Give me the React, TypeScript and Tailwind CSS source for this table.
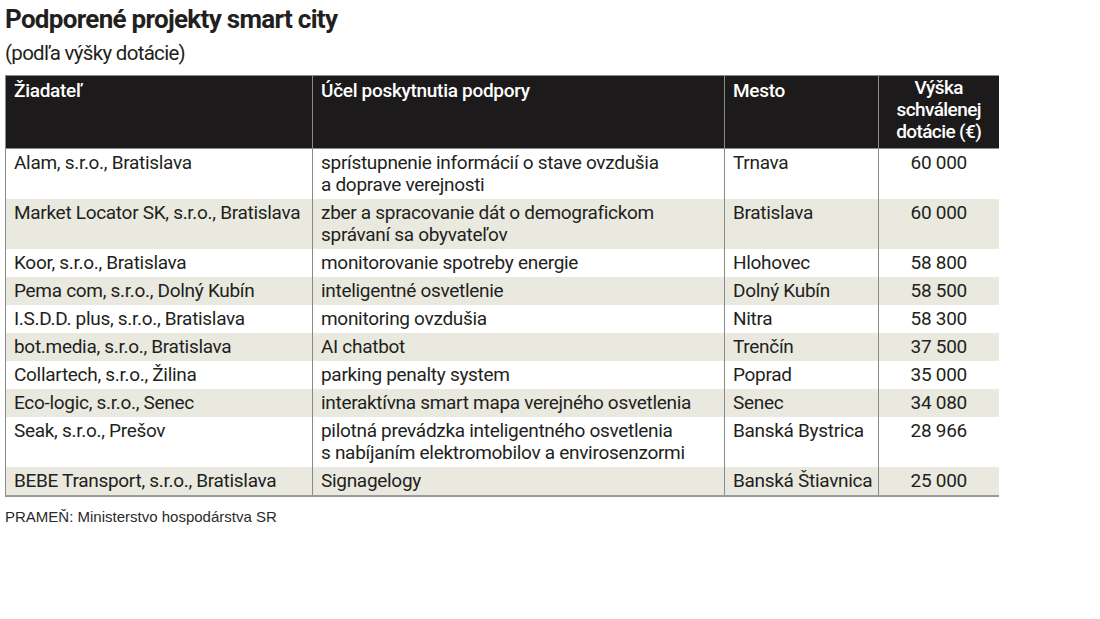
import React from "react";

type Row = {
  who: string;
  what: string[];
  city: string;
  amount: string;
};

const rows: Row[] = [
  { who: "Alam, s.r.o., Bratislava", what: ["sprístupnenie informácií o stave ovzdušia", "a doprave verejnosti"], city: "Trnava", amount: "60 000" },
  { who: "Market Locator SK, s.r.o., Bratislava", what: ["zber a spracovanie dát o demografickom", "správaní sa obyvateľov"], city: "Bratislava", amount: "60 000" },
  { who: "Koor, s.r.o., Bratislava", what: ["monitorovanie spotreby energie"], city: "Hlohovec", amount: "58 800" },
  { who: "Pema com, s.r.o., Dolný Kubín", what: ["inteligentné osvetlenie"], city: "Dolný Kubín", amount: "58 500" },
  { who: "I.S.D.D. plus, s.r.o., Bratislava", what: ["monitoring ovzdušia"], city: "Nitra", amount: "58 300" },
  { who: "bot.media, s.r.o., Bratislava", what: ["AI chatbot"], city: "Trenčín", amount: "37 500" },
  { who: "Collartech, s.r.o., Žilina", what: ["parking penalty system"], city: "Poprad", amount: "35 000" },
  { who: "Eco-logic, s.r.o., Senec", what: ["interaktívna smart mapa verejného osvetlenia"], city: "Senec", amount: "34 080" },
  { who: "Seak, s.r.o., Prešov", what: ["pilotná prevádzka inteligentného osvetlenia", "s nabíjaním elektromobilov a envirosenzormi"], city: "Banská Bystrica", amount: "28 966" },
  { who: "BEBE Transport, s.r.o., Bratislava", what: ["Signagelogy"], city: "Banská Štiavnica", amount: "25 000" },
];

export default function App() {
  return (
    <div className="w-[1100px] h-[619px] bg-white overflow-hidden font-['Roboto',sans-serif] text-[#231f20]">
      <div className="pl-[5px] pt-[3px]">
        <h1 className="text-[26px] leading-[33px] font-bold tracking-[-0.7px]">Podporené projekty smart city</h1>
        <div className="mt-[3px] text-[20.5px] leading-[28px] tracking-[-0.7px]">(podľa výšky dotácie)</div>

        <table className="mt-[8px] border-collapse table-fixed w-[993px] text-[19px] leading-[22px] tracking-[-0.3px] border-l border-[#8a8a8a]">
          <colgroup>
            <col className="w-[307px]" />
            <col className="w-[412px]" />
            <col className="w-[154px]" />
            <col className="w-[120px]" />
          </colgroup>
          <thead>
            <tr className="bg-[#1c1a1b] text-white h-[73px] align-top border-t border-b border-[#8a8a8a]">
              <th className="text-left font-medium px-2 pt-[4px]">Žiadateľ</th>
              <th className="text-left font-medium px-2 pt-[4px] border-l border-[#8a8a8a]">Účel poskytnutia podpory</th>
              <th className="text-left font-medium px-2 pt-[4px] border-l border-[#8a8a8a]">Mesto</th>
              <th className="text-center font-medium pt-[1px] leading-[22px] tracking-[-0.6px] border-l border-[#8a8a8a]">
                Výška
                <br />
                schválenej
                <br />
                dotácie (€)
              </th>
            </tr>
          </thead>
          <tbody>
            {rows.map((r, i) => (
              <tr key={r.who} className={`align-top ${i % 2 === 1 ? "bg-[#e9e9df]" : "bg-white"} ${i === rows.length - 1 ? "border-b-2 border-[#9a9a9a]" : ""}`}>
                <td className="px-2 pt-[3px] pb-[3px] whitespace-nowrap">{r.who}</td>
                <td className="px-2 pt-[3px] pb-[3px] border-l border-[#8a8a8a] whitespace-nowrap">
                  {r.what.map((l) => (
                    <div key={l}>{l}</div>
                  ))}
                </td>
                <td className="px-2 pt-[3px] pb-[3px] border-l border-[#8a8a8a] whitespace-nowrap">{r.city}</td>
                <td className="pt-[3px] pb-[3px] text-center border-l border-[#8a8a8a]">{r.amount}</td>
              </tr>
            ))}
          </tbody>
        </table>

        <div className="mt-[11px] text-[15px] leading-[18px] font-['Liberation_Sans',sans-serif] text-[#2a2a2a]">
          PRAMEŇ: Ministerstvo hospodárstva SR
        </div>
      </div>
    </div>
  );
}
